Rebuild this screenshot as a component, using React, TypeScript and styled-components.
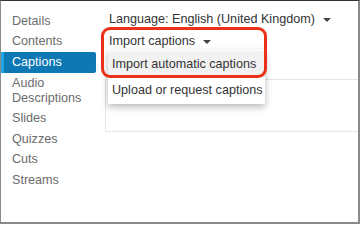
import React from "react";
import styled, { createGlobalStyle } from "styled-components";

const Global = createGlobalStyle`
  html, body { margin: 0; padding: 0; background: #fff; }
  body { font-family: "Liberation Sans", Arial, Helvetica, sans-serif; }
  * { box-sizing: border-box; }
`;

const Frame = styled.div`
  width: 360px;
  height: 224px;
  display: flex;
  border-top: 1px solid #333;
  border-left: 1px solid #8a8a8a;
  border-right: 2px solid #8a8a8a;
  border-bottom: 2px solid #8a8a8a;
  background: #fff;
  overflow: hidden;
`;

const Sidebar = styled.nav`
  width: 95px;
  flex: none;
  padding-top: 10px;
  display: flex;
  flex-direction: column;
`;

const NavItem = styled.div<{ $active?: boolean }>`
  font-size: 12.6px;
  line-height: 15px;
  padding: 2.8px 4px 2.8px ${(p) => (p.$active ? "8px" : "11px")};
  color: ${(p) => (p.$active ? "#fff" : "#6b6b6b")};
  background: ${(p) => (p.$active ? "#0d78b3" : "transparent")};
  border-left: ${(p) => (p.$active ? "3px solid #1ea6e6" : "none")};
  border-radius: 0 2px 2px 0;
`;

const Content = styled.div`
  flex: 1;
  position: relative;
  padding-top: 10px;
`;

const Row = styled.div`
  display: flex;
  align-items: center;
  gap: 8px;
  padding-left: 13px;
  font-size: 12.6px;
  line-height: 16px;
  color: #333;
`;

const Caret = styled.span`
  display: inline-block;
  width: 0;
  height: 0;
  border-left: 4px solid transparent;
  border-right: 4px solid transparent;
  border-top: 4px solid #444;
  margin-top: 1px;
`;

const ImportWrap = styled.div`
  position: relative;
  margin-top: 6px;
`;

const Menu = styled.div`
  position: absolute;
  top: 17px;
  left: 12px;
  width: 157px;
  background: #fff;
  box-shadow: 0 3px 7px rgba(0, 0, 0, 0.28);
  z-index: 2;
  padding: 1px 0;
`;

const MenuItem = styled.div<{ $hover?: boolean }>`
  font-size: 12.6px;
  line-height: 16px;
  padding: 5px 4px;
  color: #333;
  background: ${(p) => (p.$hover ? "#f2f2f2" : "#fff")};
  white-space: nowrap;
`;

const Highlight = styled.div`
  position: absolute;
  left: 5px;
  top: -6px;
  width: 166px;
  height: 51px;
  border: 3px solid #ec3119;
  border-radius: 9px;
  z-index: 3;
  pointer-events: none;
`;

const Panel = styled.div`
  margin-top: 30px;
  margin-left: 9px;
  height: 53px;
  border-top: 1px solid #e6e6e6;
  border-left: 1px solid #e6e6e6;
  border-bottom: 1px solid #e6e6e6;
`;

const items = [
  "Details",
  "Contents",
  "Captions",
  "Audio Descriptions",
  "Slides",
  "Quizzes",
  "Cuts",
  "Streams",
];

export default function App() {
  return (
    <>
      <Global />
      <Frame>
        <Sidebar>
          {items.map((t) => (
            <NavItem key={t} $active={t === "Captions"}>
              {t === "Audio Descriptions" ? (
                <>
                  Audio
                  <br />
                  Descriptions
                </>
              ) : (
                t
              )}
            </NavItem>
          ))}
        </Sidebar>
        <Content>
          <Row>
            <span>Language: English (United Kingdom)</span>
            <Caret />
          </Row>
          <ImportWrap>
            <Row>
              <span>Import captions</span>
              <Caret />
            </Row>
            <Menu>
              <MenuItem $hover>Import automatic captions</MenuItem>
              <MenuItem>Upload or request captions</MenuItem>
            </Menu>
            <Highlight />
          </ImportWrap>
          <Panel />
        </Content>
      </Frame>
    </>
  );
}
